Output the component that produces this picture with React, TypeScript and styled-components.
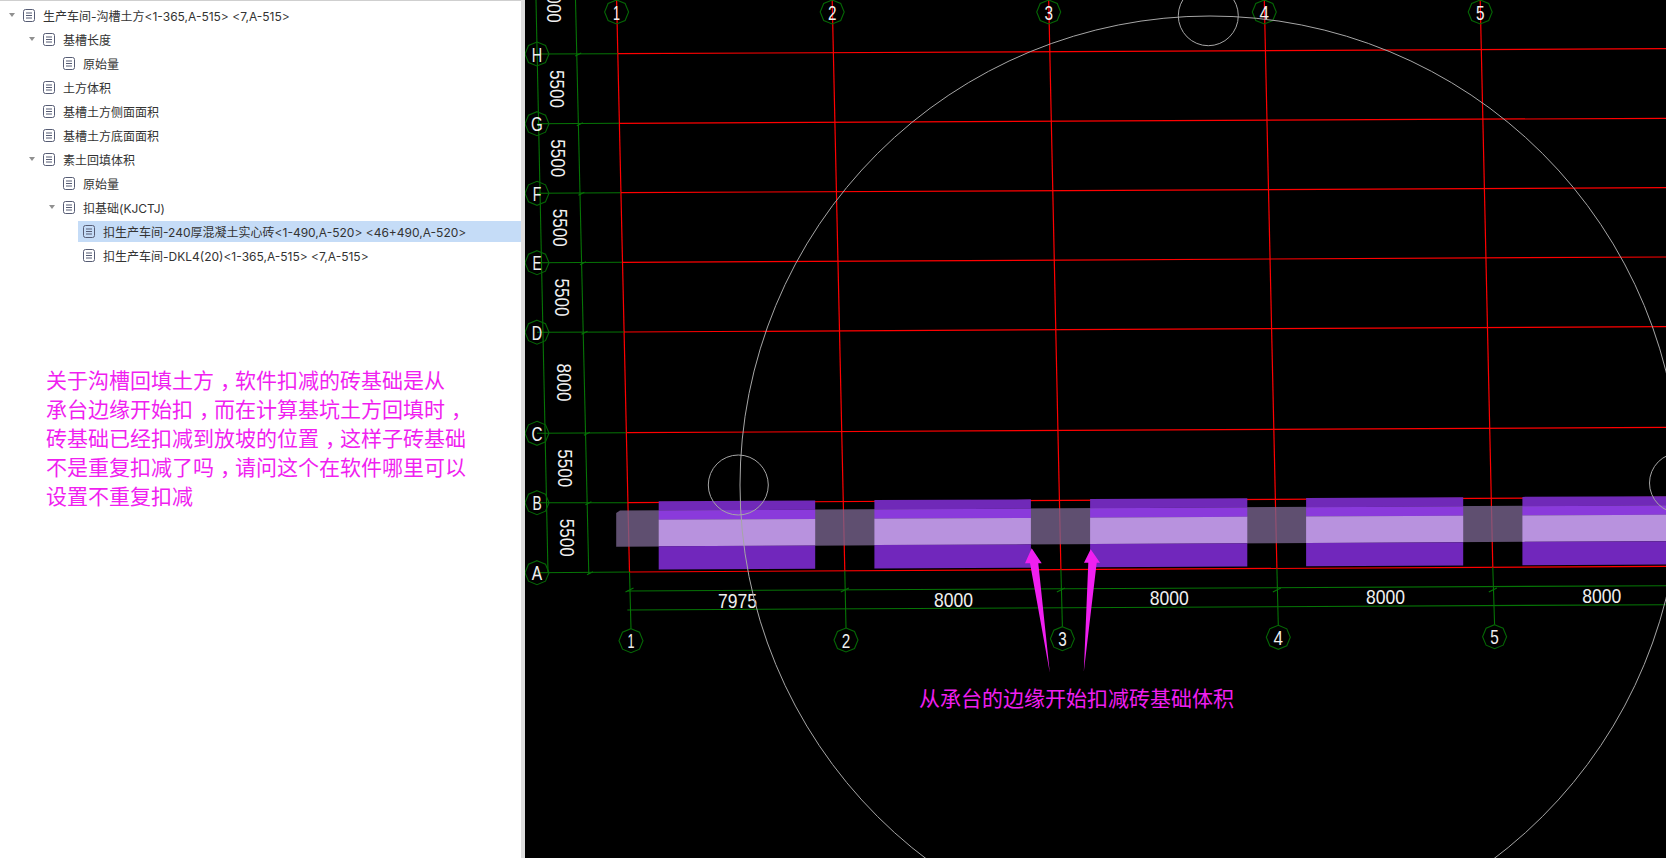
import React from 'react';
import styled, {createGlobalStyle} from 'styled-components';

const GlobalStyle = createGlobalStyle`
  html, body {
    margin: 0;
    padding: 0;
    background: #fff;
  }
`;

const Page = styled.div`
  display: flex;
  width: 100%;
  height: 100vh;
  min-height: 858px;
  overflow: hidden;
  font-family: Inter, 'Noto Sans CJK SC', sans-serif;
`;

const Panel = styled.aside`
  flex: 0 0 521px;
  box-sizing: border-box;
  padding-top: 2px;
  border-top: 1px solid #cfcfcf;
  background: #fff;
`;

const Divider = styled.div`
  flex: 0 0 4px;
  background: #dedede;
`;

const Viewport = styled.main`
  flex: 1;
  background: #000;
`;

const TreeList = styled.ul`
  margin: 0;
  padding: 0;
  list-style: none;
`;

const TreeRow = styled.li<{$depth: number}>`
  display: flex;
  align-items: center;
  height: 24px;
  padding-left: ${({$depth}) => 8 + $depth * 20}px;
`;

const CaretSlot = styled.span`
  flex: 0 0 10px;
  display: flex;
  align-items: center;
`;

const Caret = styled.span`
  width: 0;
  height: 0;
  margin-left: 0.5px;
  border-left: 3.5px solid transparent;
  border-right: 3.5px solid transparent;
  border-top: 4px solid #909090;
`;

const TreeItem = styled.div<{$selected?: boolean}>`
  flex: 1;
  display: flex;
  align-items: center;
  gap: 8px;
  height: 21px;
  padding-left: 5px;
  background: ${({$selected}) => ($selected ? '#c5dcf7' : 'transparent')};
`;

const Label = styled.span`
  color: #333;
  font-size: 12px;
  white-space: pre;
`;

const Note = styled.div`
  margin-top: 98px;
  padding-left: 46px;
  color: #f01ff0;
  font-family: 'Noto Sans CJK SC', sans-serif;
  font-size: 21px;
  line-height: 29px;
  white-space: nowrap;
`;

const NoteLine = styled.div``;

// the reference's full-width comma sits in the middle of its cell
const NoteComma = styled.span`
  font-feature-settings: 'halt';
  padding: 0 4.5px 0 6px;
`;

const Drawing = styled.svg`
  display: block;
  font-family: 'Liberation Sans', sans-serif;
`;

const RedLine = styled.line`
  stroke: #ff0000;
  stroke-width: 1.2;
`;

const GreenLine = styled.line`
  stroke: #067406;
  stroke-width: 1.1;
`;

const Bubble = styled.polygon`
  fill: none;
  stroke: #056605;
  stroke-width: 1.1;
`;

const CadText = styled.text`
  fill: #f0f0f0;
  font-size: 21px;
  text-anchor: middle;
`;

const Strip = styled.polygon`
  fill: #77638c;
  opacity: 0.8;
`;

const WhiteCircle = styled.ellipse`
  fill: none;
  stroke: #a6a6a6;
  stroke-width: 1;
`;

const Pointer = styled.polygon`
  fill: #f01ff0;
`;

const Callout = styled.text`
  fill: #f01ff0;
  font-family: 'Noto Sans CJK SC', sans-serif;
  font-size: 21px;
`;

function DocIcon() {
  return (
    <svg width='12' height='13' viewBox='0 0 12 13' fill='none' stroke='#565c74'>
      <rect x='0.5' y='0.5' width='11' height='12' rx='2' />
      <path d='M3 4h6M3 6.5h6M3 9h6' />
    </svg>
  );
}

const tree = [
  {depth: 0, open: true, text: '生产车间-沟槽土方<1-365,A-515> <7,A-515>'},
  {depth: 1, open: true, text: '基槽长度'},
  {depth: 2, text: '原始量'},
  {depth: 1, text: '土方体积'},
  {depth: 1, text: '基槽土方侧面面积'},
  {depth: 1, text: '基槽土方底面面积'},
  {depth: 1, open: true, text: '素土回填体积'},
  {depth: 2, text: '原始量'},
  {depth: 2, open: true, text: '扣基础(KJCTJ)'},
  {depth: 3, selected: true, text: '扣生产车间-240厚混凝土实心砖<1-490,A-520> <46+490,A-520>'},
  {depth: 3, text: '扣生产车间-DKL4(20)<1-365,A-515> <7,A-515>'},
];

const noteLines = [
  '关于沟槽回填土方，软件扣减的砖基础是从',
  '承台边缘开始扣，而在计算基坑土方回填时，',
  '砖基础已经扣减到放坡的位置，这样子砖基础',
  '不是重复扣减了吗，请问这个在软件哪里可以',
  '设置不重复扣减',
];

// axis lines, in page coordinates: top bubble -> A axis -> bottom bubble
const columns = [
  {n: '1', w: 7, top: 616.6, end: 629.5, endY: 572, bx: 631, by: 640.7},
  {n: '2', w: 8.5, top: 832.2, end: 844.8, endY: 570.7, bx: 846, by: 640},
  {n: '3', w: 8.5, top: 1048.7, end: 1060.9, endY: 569.3, bx: 1062.4, by: 638.7},
  {n: '4', w: 9.5, top: 1264.3, end: 1276.9, endY: 568.3, bx: 1278.3, by: 637.3},
  {n: '5', w: 8.5, top: 1480.2, end: 1492.8, endY: 567.3, bx: 1494.6, by: 636.7},
];

const rows = [
  {n: 'H', w: 10.4, y: 54, x: 617.7, ly: 53.7, ry: 48.7},
  {n: 'G', w: 11.8, y: 123.7, x: 619, ly: 123.3, ry: 118.3},
  {n: 'F', w: 8.5, y: 193.3, x: 620.6, ly: 192.7, ry: 187.7},
  {n: 'E', w: 9, y: 262.7, x: 622, ly: 262.3, ry: 257},
  {n: 'D', w: 10.4, y: 332.2, x: 624, ly: 332, ry: 326.6},
  {n: 'C', w: 11, y: 433.3, x: 626.2, ly: 432.7, ry: 427.3},
  {n: 'B', w: 9.2, y: 502.7, x: 627.3, ly: 502.7, ry: 497.3},
  {n: 'A', w: 10.4, y: 572.7, x: 629.5, ly: 572, ry: 566.3},
];

const sideDims = [
  {t: '8000', x: 555, y: 3.7},
  {t: '5500', x: 557, y: 89},
  {t: '5500', x: 558.8, y: 158.3},
  {t: '5500', x: 560.7, y: 227.7},
  {t: '5500', x: 562.4, y: 297.5},
  {t: '8000', x: 564, y: 382.5},
  {t: '5500', x: 565.9, y: 468.3},
  {t: '5500', x: 567.4, y: 537.7},
];

const bottomDims = [
  {t: '7975', x: 737.5, y: 600},
  {t: '8000', x: 953.6, y: 599},
  {t: '8000', x: 1169.3, y: 597.7},
  {t: '8000', x: 1385.6, y: 596.7},
  {t: '8000', x: 1601.8, y: 595.7},
];

const footings = [
  {from: 658.7, to: 815.2},
  {from: 874.4, to: 1030.9},
  {from: 1090.1, to: 1247.3},
  {from: 1306.1, to: 1463.2},
  {from: 1522.4, to: 1680},
];

const bands = [
  {start: 0, end: 9.3, color: '#7029b8'},
  {start: 9.3, end: 18.6, color: '#8a3adb'},
  {start: 18.6, end: 45, color: '#b892de'},
  {start: 45, end: 68.3, color: '#7127bc'},
];

const footingTop = (x: number) => 501.2 - (x - 658) * 0.005;

const bubblePoints = (cx: number, cy: number, r = 12, sides = 8) =>
  Array.from({length: sides}, (_, i) => {
    const a = (i / sides) * Math.PI * 2 - Math.PI / 2;
    return `${(cx + r * Math.cos(a)).toFixed(1)},${(cy + r * Math.sin(a)).toFixed(1)}`;
  }).join(' ');

function CadView() {
  return (
    <Drawing width='1141' height='858' viewBox='525 0 1141 858'>
      {columns.map(c => (
        <RedLine key={c.n} x1={c.top} y1={0} x2={c.end} y2={c.endY} />
      ))}
      {rows.map(r => (
        <g key={r.n}>
          <RedLine x1={r.x} y1={r.ly} x2={1666} y2={r.ry} />
          <GreenLine x1={537} y1={r.y} x2={r.x} y2={r.ly} />
        </g>
      ))}

      <GreenLine x1={536} y1={0} x2={548} y2={572.7} />
      <GreenLine x1={575.5} y1={0} x2={588.8} y2={574} />
      <GreenLine x1={627.3} y1={591} x2={1666} y2={585.7} />
      <GreenLine x1={627.3} y1={610} x2={1666} y2={604.7} />

      {rows.map(r => (
        <GreenLine
          key={r.n}
          x1={574 + (r.y / 572) * 13}
          y1={r.y + 2}
          x2={580 + (r.y / 572) * 13}
          y2={r.y - 1}
        />
      ))}

      {columns.map(c => (
        <g key={c.n}>
          <GreenLine x1={c.end} y1={c.endY} x2={c.bx} y2={c.by - 12} />
          <GreenLine x1={c.end - 4} y1={592} x2={c.end + 4} y2={588} />
          <Bubble points={bubblePoints(c.top, 12)} />
          <CadText x={c.top} y={19.5} textLength={c.w} lengthAdjust='spacingAndGlyphs'>
            {c.n}
          </CadText>
          <Bubble points={bubblePoints(c.bx, c.by)} />
          <CadText x={c.bx} y={c.by + 7.5} textLength={c.w} lengthAdjust='spacingAndGlyphs'>
            {c.n}
          </CadText>
        </g>
      ))}

      {rows.map(r => (
        <g key={r.n}>
          <Bubble points={bubblePoints(537, r.y)} />
          <CadText x={537} y={r.y + 7.5} textLength={r.w} lengthAdjust='spacingAndGlyphs'>
            {r.n}
          </CadText>
        </g>
      ))}

      {sideDims.map(d => (
        <CadText
          key={`${d.t}-${d.y}`}
          x={d.x}
          y={d.y + 7.5}
          textLength={38}
          lengthAdjust='spacingAndGlyphs'
          transform={`rotate(90 ${d.x} ${d.y})`}
        >
          {d.t}
        </CadText>
      ))}
      {bottomDims.map(d => (
        <CadText key={d.x} x={d.x} y={d.y + 7.5} textLength={39} lengthAdjust='spacingAndGlyphs'>
          {d.t}
        </CadText>
      ))}

      <Strip points='616.2,513 620,510.6 1666,505 1666,541 616.2,546.7' />

      {footings.map(f =>
        bands.map(b => (
          <polygon
            key={`${f.from}-${b.start}`}
            fill={b.color}
            points={[
              `${f.from},${footingTop(f.from) + b.start}`,
              `${f.to},${footingTop(f.to) + b.start}`,
              `${f.to},${footingTop(f.to) + b.end}`,
              `${f.from},${footingTop(f.from) + b.end}`,
            ].join(' ')}
          />
        )),
      )}

      <WhiteCircle cx={1210} cy={485} rx={470} ry={469} />
      <WhiteCircle cx={738.3} cy={485} rx={30} ry={30} />
      <WhiteCircle cx={1208.3} cy={15.7} rx={30} ry={30} />
      <WhiteCircle cx={1679.5} cy={483} rx={30} ry={30} />

      <Pointer points='1031.7,548.3 1041.7,563.3 1038.3,563.3 1049.8,672.7 1030,563.3 1025,563.3' />
      <Pointer points='1090.7,549.3 1100,562.7 1096.7,562.7 1083.8,671.7 1088.3,562.7 1084,562.7' />
      <Callout x={919} y={705.5}>
        从承台的边缘开始扣减砖基础体积
      </Callout>
    </Drawing>
  );
}

export default function App() {
  return (
    <>
      <GlobalStyle />
      <Page>
        <Panel>
          <TreeList>
            {tree.map((node, i) => (
              <TreeRow key={i} $depth={node.depth}>
                <CaretSlot>{node.open && <Caret />}</CaretSlot>
                <TreeItem $selected={node.selected}>
                  <DocIcon />
                  <Label>{node.text}</Label>
                </TreeItem>
              </TreeRow>
            ))}
          </TreeList>
          <Note>
            {noteLines.map(line => (
              <NoteLine key={line}>
                {line.split('，').map((part, i) => (
                  <React.Fragment key={i}>
                    {i > 0 && <NoteComma>，</NoteComma>}
                    {part}
                  </React.Fragment>
                ))}
              </NoteLine>
            ))}
          </Note>
        </Panel>
        <Divider />
        <Viewport>
          <CadView />
        </Viewport>
      </Page>
    </>
  );
}
